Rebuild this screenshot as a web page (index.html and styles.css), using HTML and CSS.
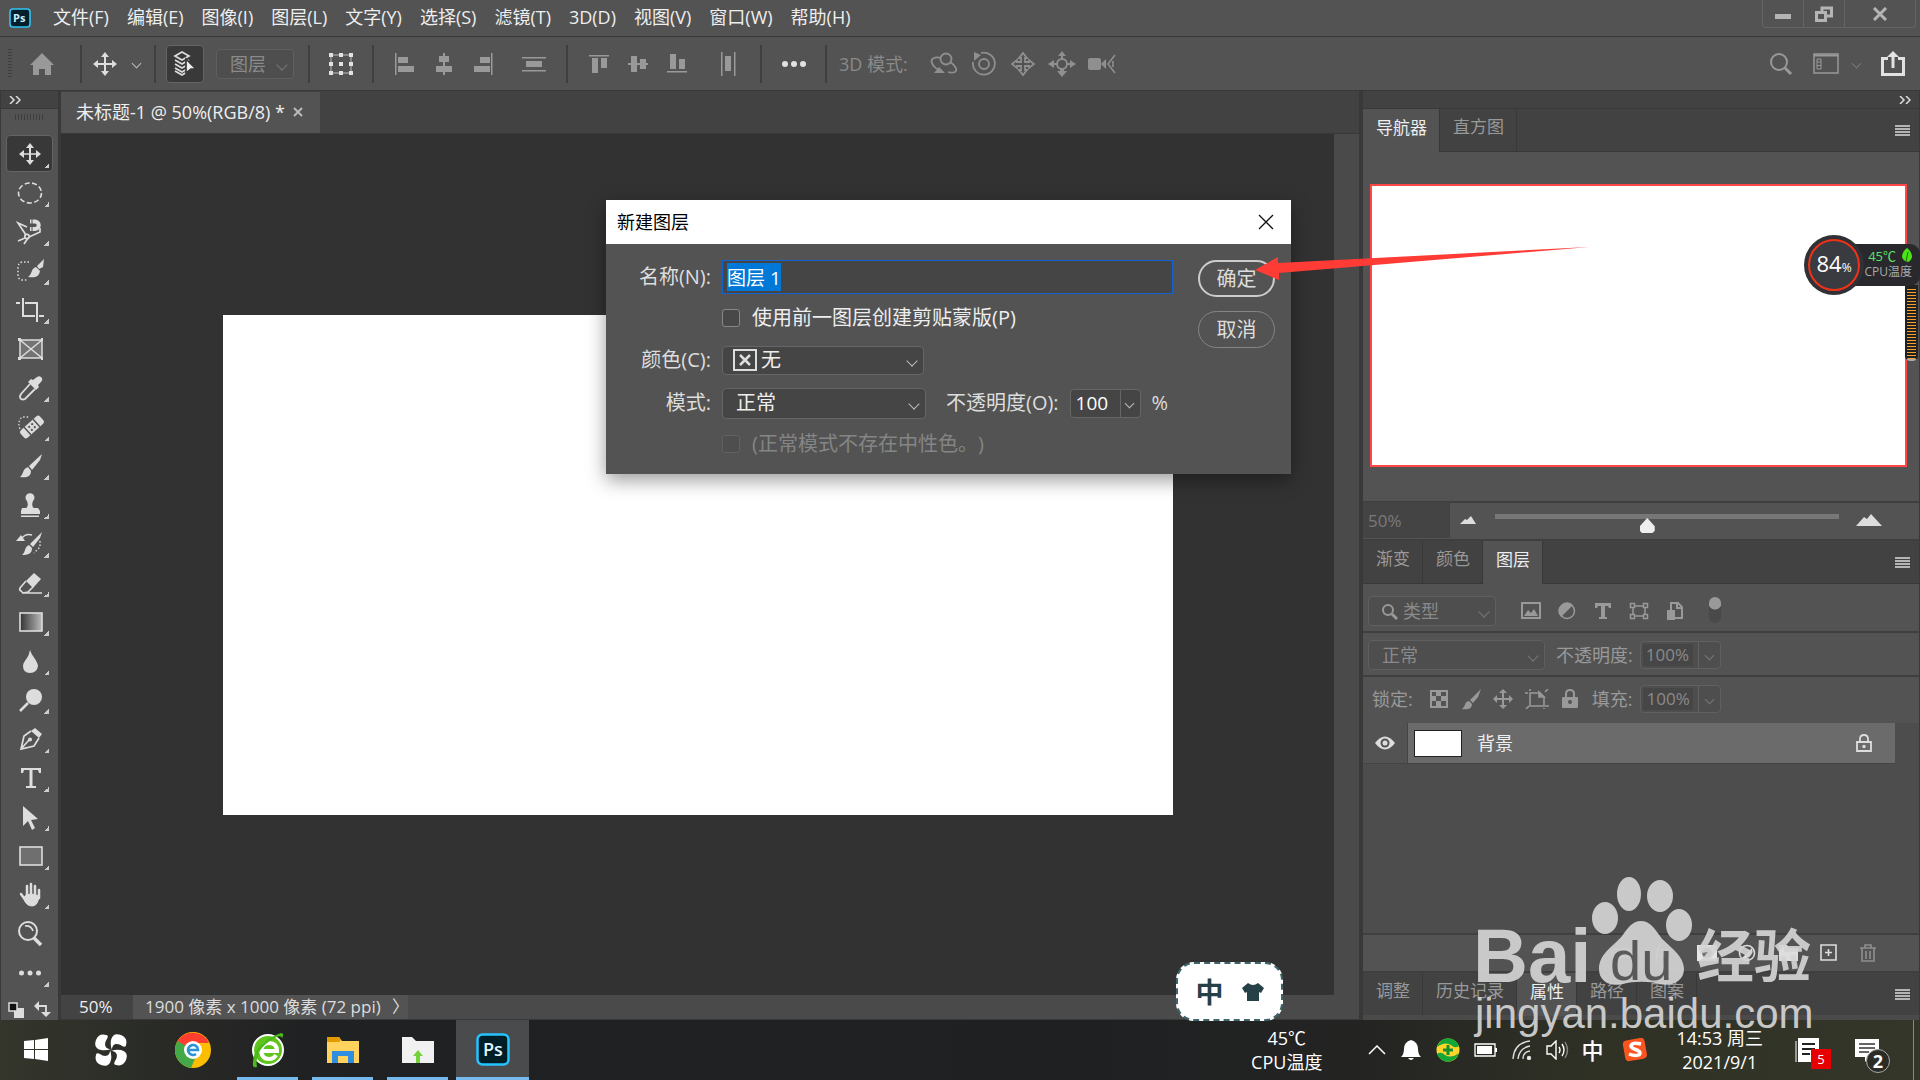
FILE: index.html
```html
<!DOCTYPE html>
<html lang="zh-CN">
<head>
    <meta charset="UTF-8">
    <title>未标题-1 @ 50%(RGB/8)</title>
    <link rel="stylesheet" href="styles.css">
</head>
<body>
    <!-- Menu bar -->
    <header class="menu-bar">
        <svg class="app-logo" viewBox="0 0 22 20"><rect x="1" y="1" width="20" height="18" rx="3" fill="#001e2b" stroke="#31c5f4" stroke-width="1.6"/><text x="4" y="14" class="logo-small">Ps</text></svg>
        <nav class="menus">
            <a href="#">文件(F)</a><a href="#">编辑(E)</a><a href="#">图像(I)</a><a href="#">图层(L)</a><a href="#">文字(Y)</a><a href="#">选择(S)</a><a href="#">滤镜(T)</a><a href="#">3D(D)</a><a href="#">视图(V)</a><a href="#">窗口(W)</a><a href="#">帮助(H)</a>
        </nav>
        <div class="window-buttons">
            <button aria-label="最小化"><svg width="16" height="16"><path d="M0 8h16v5H0z" fill="#b4b4b4"/></svg></button>
            <button aria-label="还原"><svg width="18" height="16" fill="none" stroke="#b4b4b4" stroke-width="3"><path d="M1.500 6.500h9v8h-9zM7 6V2h9.500v8H11"/></svg></button>
            <button class="wide" aria-label="关闭"><svg width="16" height="14" stroke="#b4b4b4" stroke-width="3"><path d="M2 1l12 12M14 1L2 13"/></svg></button>
        </div>
    </header>

    <!-- Options bar -->
    <div class="options-bar">
        <span class="grip-v"></span>
        <button class="icon-btn home" aria-label="主页"><svg width="26" height="24" fill="#999"><path d="M13 1l12 12h-3v10h-6v-6h-6v6H4V13H1z"/></svg></button>
        <span class="divider"></span>
        <button class="icon-btn preset" aria-label="移动工具"><svg width="24" height="24" fill="#ddd"><path d="M12 0l4 5h-3v6h6V8l5 4-5 4v-3h-6v6h3l-4 5-4-5h3v-6H5v3l-5-4 5-4v3h6V5H8z"/></svg><i class="chevron"></i></button>
        <span class="divider"></span>
        <button class="icon-btn pressed" aria-label="自动选择"><svg width="26" height="26" fill="none" stroke="#ddd" stroke-width="1.700"><path d="M10 1l7 4-7 4-7-4zM3 9l7 4 7-4M3 13l7 4 7-4M3 17l7 4 7-4M3 20l7 4 5-3"/><path d="M14 8l10 10h-5l-5 4z" fill="#eee" stroke="#393939"/></svg></button>
        <div class="select auto-target"><select disabled aria-label="自动选择对象"><option>图层</option></select></div>
        <span class="divider"></span>
        <button class="icon-btn transform" aria-label="显示变换控件"><svg width="26" height="24"><path d="M3 3h20v18H3z" fill="none" stroke="#999" stroke-width="1.500"/><path fill="#e2e2e2" d="M1 1h4v4H1zM11 1h4v4h-4zM21 1h4v4h-4zM1 10h4v4H1zM11 10h4v4h-4zM21 10h4v4h-4zM1 19h4v4H1zM11 19h4v4h-4zM21 19h4v4h-4z"/></svg></button>
        <span class="divider"></span>
        <div class="align-group">
            <button class="icon-btn" aria-label="左对齐"><svg width="24" height="24" fill="#999"><path d="M2 1h1.500v22H2zM5 5h10v6H5zM5 14h16v6H5z"/></svg></button>
            <button class="icon-btn" aria-label="水平居中对齐"><svg width="24" height="24" fill="#999"><path d="M11 1h2v22h-2zM7 4h10v6H7zM4 14h16v6H4z"/></svg></button>
            <button class="icon-btn" aria-label="右对齐"><svg width="24" height="24" fill="#999"><path d="M20 1h1.500v22H20zM9 5h10v6H9zM3 14h16v6H3z"/></svg></button>
            <button class="icon-btn spaced" aria-label="垂直分布"><svg width="24" height="24" fill="#999"><path d="M0 5h24v1.500H0zM0 18h24v1.500H0zM4 9h16v6H4z"/></svg></button>
        </div>
        <span class="divider"></span>
        <div class="align-group">
            <button class="icon-btn" aria-label="顶对齐"><svg width="24" height="24" fill="#999"><path d="M2 3h20v1.500H2zM5 6h6v15H5zM14 6h6v10h-6z"/></svg></button>
            <button class="icon-btn" aria-label="垂直居中对齐"><svg width="24" height="24" fill="#999"><path d="M2 11h20v2H2zM5 4h6v16H5zM14 7h6v10h-6z"/></svg></button>
            <button class="icon-btn" aria-label="底对齐"><svg width="24" height="24" fill="#999"><path d="M2 19h20v1.500H2zM5 2h6v15H5zM14 7h6v10h-6z"/></svg></button>
            <button class="icon-btn spaced" aria-label="水平分布"><svg width="24" height="24" fill="#999"><path d="M5 0h1.500v24H5zM18 0h1.500v24H18zM9 4h6v15H9z"/></svg></button>
        </div>
        <span class="divider"></span>
        <button class="icon-btn more" aria-label="更多"><svg width="26" height="8" fill="#e2e2e2"><circle cx="4" cy="4" r="3"/><circle cx="13" cy="4" r="3"/><circle cx="22" cy="4" r="3"/></svg></button>
        <span class="divider"></span>
        <span class="mode-3d">3D 模式:</span>
        <div class="align-group modes">
            <button class="icon-btn" aria-label="环绕"><svg width="28" height="24" fill="none" stroke="#8f8f8f" stroke-width="1.800"><circle cx="16" cy="7" r="5.500"/><path d="M11 6C5 4 0 7 2 11c1 4 6 7 10 8M20 10c5 3 8 8 5 10-2 1-4 1-7 0"/><path d="M9 15l6 6H4z" fill="#8f8f8f" stroke="none"/></svg></button>
            <button class="icon-btn" aria-label="滚动"><svg width="28" height="26" fill="none" stroke="#8f8f8f" stroke-width="1.800"><circle cx="14" cy="13" r="5"/><path d="M11 2a11 11 0 1 1-8 9"/><path d="M4 1l7 3-7 6z" fill="#8f8f8f" stroke="none"/></svg></button>
            <button class="icon-btn" aria-label="平移"><svg width="26" height="26" fill="none" stroke="#8f8f8f" stroke-width="1.800"><path d="M13 2l4 5h-2v4h4V9l5 4-5 4v-2h-4v4h2l-4 5-4-5h2v-4H7v2l-5-4 5-4v2h4V7H9z"/></svg></button>
            <button class="icon-btn" aria-label="滑动"><svg width="28" height="26"><circle cx="14" cy="13" r="5" fill="none" stroke="#8f8f8f" stroke-width="2"/><path fill="#8f8f8f" d="M14 0l4 5h-3v3h-2V5h-3zM0 13l6-4v3h3v2H6v3zM28 13l-6-4v3h-3v2h3v3zM14 26l-5-6h3v-2h4v2h3z"/></svg></button>
            <button class="icon-btn" aria-label="变焦"><svg width="28" height="20" fill="#8f8f8f"><rect x="0" y="4" width="13" height="12" rx="2"/><path d="M13 10l5-5v10z"/><path d="M27 1l-7 9 7 9M25 7v6" fill="none" stroke="#8f8f8f" stroke-width="1.600"/></svg></button>
        </div>
        <div class="bar-end">
            <button class="icon-btn" aria-label="搜索"><svg width="24" height="24" fill="none" stroke="#999" stroke-width="2"><circle cx="10" cy="10" r="8"/><path d="M16 16l6 6" stroke-width="3"/></svg></button>
            <button class="icon-btn" aria-label="工作区"><svg width="26" height="22" fill="none" stroke="#999"><rect x="1" y="1" width="24" height="19" stroke-width="1.500"/><path d="M1 2.500h24" stroke-width="2"/><path d="M4 6h4v10H4zM4 9h4M4 12.500h4"/></svg></button>
            <i class="chevron dim"></i>
            <button class="icon-btn" aria-label="共享"><svg width="26" height="26" fill="none" stroke="#e2e2e2" stroke-width="3"><path d="M8 7.500H2.500v16h21v-16H18M13 17V4"/><path d="M13 0l6 6H7z" fill="#e2e2e2" stroke="none"/></svg></button>
        </div>
    </div>

    <div class="workspace">
        <!-- Tools -->
        <aside class="toolbox">
            <div class="dock-head"><svg width="12" height="8" fill="none" stroke="#ddd" stroke-width="1.500"><path d="M1 0l4 4-4 4M7 0l4 4-4 4"/></svg></div>
            <div class="grip-h"></div>
            <div class="tools">
                <button class="tool active" aria-label="移动"><svg viewBox="0 0 28 28" fill="#ddd"><path d="M14 3l4 5h-3v5.300h5V10l5 4-5 4v-3.300h-5V20h3l-4 5-4-5h3v-5.300H8V18l-5-4 5-4v3.300h5V8h-3z"/></svg></button>
                <button class="tool" aria-label="椭圆选框"><svg viewBox="0 0 28 28" fill="none" stroke="#ddd" stroke-width="1.600"><ellipse cx="14" cy="14" rx="11.500" ry="10" stroke-dasharray="5 2.500"/></svg></button>
                <button class="tool" aria-label="磁性套索"><svg viewBox="0 0 28 28" fill="none" stroke="#ddd" stroke-width="1.700"><path d="M11 9L2 5l8 12M2 23l7-3M8 26l4-6M13 19l11-5v-4"/><circle cx="11" cy="18.500" r="2.200"/><path d="M14 3.500h5a3.500 3.500 0 0 1 0 7.500h-5" stroke-width="4"/><path d="M16 1v12" stroke="#535353" stroke-width="1"/></svg></button>
                <button class="tool" aria-label="快速选择"><svg viewBox="0 0 28 28" fill="#ddd"><path d="M13 5H6q-4 1-4 6v7q0 4 4 5h6" fill="none" stroke="#ddd" stroke-width="1.500" stroke-dasharray="1.500 2"/><path d="M28 2l-1 8-4 2-2-3zM20 10l4 4c-1 6-5 7-12 6 4-2 3-9 8-10z"/></svg></button>
                <button class="tool" aria-label="裁剪"><svg viewBox="0 0 28 28" fill="none" stroke="#ddd" stroke-width="2"><path d="M0 7h4M7 2v18h12M9 7h12v19M23 20h5"/></svg></button>
                <button class="tool plain" aria-label="图框"><svg viewBox="0 0 28 28" fill="#737373" stroke="#ddd" stroke-width="1.500"><path d="M4 5h22v18H4zM4 5l22 18M26 5L4 23"/><path d="M2 3h3v3H2zM25 3h2v3h-2zM2 22h3v3H2zM25 22h2v3h-2z" fill="#ddd" stroke="none"/></svg></button>
                <button class="tool" aria-label="吸管"><svg viewBox="0 0 28 28" fill="#ddd"><path d="M21 3q3-2 5 1 1 2-1 4l-3 3 1 2-3 3-8-8 3-3 2 1z"/><path d="M14 10l-9 10q-2 3 0 5 2 1 4 0l10-10" fill="none" stroke="#ddd" stroke-width="1.800"/></svg></button>
                <button class="tool" aria-label="污点修复"><svg viewBox="0 0 28 28" fill="#ddd"><path d="M4 16q-3-7 2-12h7" fill="none" stroke="#ddd" stroke-width="1.300" stroke-dasharray="1.500 2"/><g transform="rotate(-42 16 14)"><rect x="3" y="9" width="26" height="10" rx="2.500"/><path d="M10 9v10M22 9v10" stroke="#535353" stroke-width="1.500"/><path d="M13 12h7M13 16h7" stroke="#535353" stroke-width="2" stroke-dasharray="2 2"/></g></svg></button>
                <button class="tool" aria-label="画笔"><svg viewBox="0 0 28 28" fill="#ddd"><path d="M26 2l-2 6-8 10-3-4zM12 15l3 4c0 6-5 7-11 6 4-3 2-8 8-10z"/></svg></button>
                <button class="tool" aria-label="仿制图章"><svg viewBox="0 0 28 28" fill="#ddd"><path d="M11 10a4.500 4.500 0 1 1 6 0q-2 5 1 7h4l2 3v3H5v-3l1-3h4q3-2 1-7zM5 24.500h18V26H5z"/></svg></button>
                <button class="tool" aria-label="历史记录画笔"><svg viewBox="0 0 28 28" fill="#ddd"><path d="M26 2l-2 6-7 9-3-3zM13 15l3 3c0 6-4 7-10 7 4-3 2-8 7-10zM0 11l5-6 4 6z"/><path d="M6 8q4-5 10-3" fill="none" stroke="#ddd" stroke-width="1.500"/><path d="M24 11v6l-6 6" fill="none" stroke="#ddd" stroke-width="1.500" stroke-dasharray="1.500 2"/></svg></button>
                <button class="tool" aria-label="橡皮擦"><svg viewBox="0 0 28 28" fill="#ddd"><path d="M18 4l7 6-8 9-7-7z"/><path d="M10 12l-6 7q-1 2 1 3l2 2 5-1 5-5M6 24h20" fill="none" stroke="#ddd" stroke-width="1.600"/></svg></button>
                <button class="tool" aria-label="渐变"><svg viewBox="0 0 28 28"><linearGradient id="grad"><stop stop-color="#333"/><stop offset="1" stop-color="#bbb"/></linearGradient><rect x="4" y="5" width="22" height="18" fill="url(#grad)" stroke="#ddd" stroke-width="1.600"/></svg></button>
                <button class="tool" aria-label="模糊"><svg viewBox="0 0 28 28" fill="#ddd"><path d="M14 3q1 4 5 9 3 5 3 7-1 7-8 7t-7-7q0-3 4-8 2-3 3-8z"/></svg></button>
                <button class="tool" aria-label="减淡"><svg viewBox="0 0 28 28" fill="#ddd"><circle cx="18" cy="11" r="8"/><path d="M12 17l-8 8" stroke="#ddd" stroke-width="2.500"/></svg></button>
                <button class="tool" aria-label="钢笔"><svg viewBox="0 0 28 28" fill="#ddd"><path d="M19 3l7 6-3 4-8-7z"/><path d="M15 6L8 11 5 24l13-3 5-8M5 24l8-9" fill="none" stroke="#ddd" stroke-width="1.700"/><circle cx="14" cy="14.500" r="2"/></svg></button>
                <button class="tool" aria-label="文字"><svg viewBox="0 0 28 28" fill="#ddd"><path d="M5 4h20v5h-2l-1-3h-5.500v16h3.500v2H10v-2h3.500V6H8L7 9H5z"/></svg></button>
                <button class="tool" aria-label="路径选择"><svg viewBox="0 0 28 28" fill="#ddd"><path d="M7 3l15 13-7 1 4 8-3 2-4-9-5 5z"/></svg></button>
                <button class="tool" aria-label="矩形"><svg viewBox="0 0 28 28"><rect x="4" y="5" width="22" height="18" fill="#6f6f6f" stroke="#ddd" stroke-width="1.600"/></svg></button>
                <button class="tool" aria-label="抓手"><svg viewBox="0 0 28 28" fill="#ddd" stroke="#ddd" stroke-linecap="round"><path d="M9 15q5-4 14 0-1 10-7 10t-8-7z"/><path d="M11 16V5M15 14V3M19 14V5M23 17V9M10 20l-5-7" stroke-width="2.500" fill="none"/></svg></button>
                <button class="tool plain" aria-label="缩放"><svg viewBox="0 0 28 28" fill="none" stroke="#ddd" stroke-width="2"><circle cx="12" cy="11" r="9"/><path d="M18 18l7 7" stroke-width="3.500"/><path d="M9 6q6-1 8 5" stroke-width="1.700"/></svg></button>
                <button class="tool" aria-label="编辑工具栏"><svg viewBox="0 0 28 28" fill="#ddd"><circle cx="5.500" cy="14" r="2.500"/><circle cx="14" cy="14" r="2.500"/><circle cx="22.500" cy="14" r="2.500"/></svg></button>
            </div>
            <div class="swatches">
                <svg width="42" height="18"><path d="M6 7h10v10H6z" fill="#ddd"/><path d="M1 2h8v8H1z" fill="#111" stroke="#ddd" stroke-width="1.500"/><path d="M30 5h8v8" fill="none" stroke="#ddd" stroke-width="1.800"/><path d="M26 5l5-5v10zM38 16l-5-5h10z" fill="#ddd"/></svg>
            </div>
        </aside>

        <!-- Document window -->
        <main class="document">
            <div class="doc-tabs">
                <div class="doc-tab">未标题-1 @ 50%(RGB/8) * <button aria-label="关闭文档"><svg width="10" height="10" stroke="#bbb" stroke-width="2"><path d="M1 1l8 8M9 1L1 9"/></svg></button></div>
            </div>
            <div class="canvas-row">
                <div class="canvas"><div class="artboard"></div></div>
                <div class="scroll-v"></div>
            </div>
            <div class="status-bar">
                <span class="zoom-value">50%</span>
                <span class="doc-size">1900 像素 x 1000 像素 (72 ppi)<span class="arrow">〉</span></span>
            </div>
        </main>

        <!-- Panels -->
        <aside class="panels">
            <div class="dock-head end"><svg width="12" height="8" fill="none" stroke="#ddd" stroke-width="1.500"><path d="M1 0l4 4-4 4M7 0l4 4-4 4"/></svg></div>
            <div class="panel-tabs">
                <button class="on">导航器</button><button>直方图</button>
                <span class="panel-menu"></span>
            </div>
            <div class="navigator"><div class="preview"></div></div>
            <div class="nav-zoom">
                <input class="nav-value" type="text" value="50%" aria-label="缩放比例">
                <svg width="16" height="8" fill="#ddd"><path d="M0 8l5-5 2 1 4-4 5 8z"/></svg>
                <input type="range" min="0" max="100" value="44" aria-label="缩放滑块">
                <svg width="26" height="12" fill="#ddd"><path d="M0 12l8-9 3 2 4-5 11 12z"/></svg>
            </div>
            <div class="panel-tabs">
                <button>渐变</button><button>颜色</button><button class="on">图层</button>
                <span class="panel-menu"></span>
            </div>
            <div class="layer-filter">
                <div class="select kind"><svg width="17" height="17" fill="none" stroke="#999" stroke-width="2"><circle cx="7" cy="7" r="5"/><path d="M11 11l5 5" stroke-width="3"/></svg><select disabled aria-label="类型"><option>类型</option></select></div>
                <div class="filter-icons">
                    <svg width="20" height="18"><path d="M1 1h18v15H1z" fill="none" stroke="#999" stroke-width="2"/><path d="M3 14l4-6 3 3 3-4 4 7z" fill="#999"/></svg>
                    <svg width="20" height="18"><circle cx="10" cy="9" r="7.500" fill="none" stroke="#999" stroke-width="1.500"/><path d="M16 3L4 15A8 8 0 0 1 4 3 8 8 0 0 1 16 3z" fill="#999"/></svg>
                    <svg width="20" height="18" fill="#999"><path d="M2 1h16v5h-2l-1-2h-3v11h2v2H6v-2h2V4H5L4 6H2z"/></svg>
                    <svg width="20" height="18" fill="none" stroke="#999" stroke-width="1.500"><path d="M4 4h12v10H4z"/><path d="M1.500 1.500h4v4h-4zM14.500 1.500h4v4h-4zM1.500 12.500h4v4h-4zM14.500 12.500h4v4h-4z" fill="#535353"/></svg>
                    <svg width="20" height="18"><path d="M6 8V1h7l4 4v11h-7M12 1v5h5" fill="none" stroke="#999" stroke-width="2"/><path d="M2 8h8v10H2z" fill="#999"/></svg>
                </div>
                <span class="toggle"></span>
            </div>
            <div class="layer-mode">
                <div class="select blend"><select disabled aria-label="混合模式"><option>正常</option></select></div>
                <label for="opacity">不透明度:</label>
                <div class="spin dim"><input id="opacity" type="text" value="100%" disabled><i class="chevron dim"></i></div>
            </div>
            <div class="layer-lock">
                <span class="lock-label">锁定:</span>
                <div class="lock-icons">
                    <svg width="20" height="20"><path d="M2 2h16v16H2z" fill="none" stroke="#999" stroke-width="2"/><path fill="#999" d="M7 3h5v4H7zM3 7h4v5H3zM12 7h5v5h-5zM7 12h5v5H7z"/></svg>
                    <svg width="20" height="22" fill="#999"><path d="M20 1l-3 8-5 6-3-3zM8 13l3 3c0 5-5 6-10 5 4-3 2-7 7-8z"/></svg>
                    <svg width="20" height="20" fill="#999"><path d="M10 0l4 4h-3v5h5V6l4 4-4 4v-3h-5v5h3l-4 4-4-4h3v-5H4v3l-4-4 4-4v3h5V4H6z"/></svg>
                    <svg width="24" height="20" fill="none" stroke="#999" stroke-width="1.600"><path d="M5 4h10l4 4v9H5zM0 4h3M5 0v2M20 17h4M19 19v2M20 3l3-3M1 20l3-3"/><path d="M14 3l5 5h-5z" fill="#999"/></svg>
                    <svg width="18" height="20"><path d="M5 9V5q0-4 4-4t4 4v4" fill="none" stroke="#999" stroke-width="2"/><rect x="1" y="8" width="16" height="11" rx="1" fill="#999"/><circle cx="9" cy="13" r="2" fill="#535353"/></svg>
                </div>
                <label for="fill">填充:</label>
                <div class="spin dim"><input id="fill" type="text" value="100%" disabled><i class="chevron dim"></i></div>
            </div>
            <div class="layer-list">
                <div class="layer">
                    <span class="eye"><svg width="20" height="14"><path d="M0 7q10-13 20 0Q10 20 0 7z" fill="#ddd"/><circle cx="10" cy="7" r="4.500" fill="#535353"/><circle cx="10" cy="7" r="2.500" fill="#ddd"/></svg></span>
                    <div class="layer-body">
                        <span class="thumb"></span>
                        <span class="layer-name">背景</span>
                        <svg width="16" height="19"><path d="M4 8V5q0-4 4-4t4 4v3M1 8h14v9H1z" fill="none" stroke="#ddd" stroke-width="1.800"/><circle cx="8" cy="12.500" r="1.700" fill="#ddd"/></svg>
                    </div>
                </div>
            </div>
            <div class="layer-footer">
                <svg width="22" height="18" fill="none" stroke="#888" stroke-width="2"><rect x="1" y="5" width="11" height="8" rx="4"/><rect x="9" y="5" width="11" height="8" rx="4"/></svg>
                <svg width="22" height="22"><text x="1" y="16" class="fx">fx</text></svg>
                <svg width="20" height="16"><path d="M0 0h20v16H0z" fill="#e6e6e6"/><circle cx="10" cy="8" r="5" fill="#777"/></svg>
                <svg width="20" height="18"><circle cx="9" cy="9" r="7.500" fill="none" stroke="#ddd" stroke-width="1.600"/><path d="M14 4L4 14a8 8 0 0 0 10-10z" fill="#ddd"/></svg>
                <svg width="20" height="16" fill="#ddd"><path d="M0 0h8l2 3h9v13H0z"/></svg>
                <svg width="18" height="18" fill="none" stroke="#ddd" stroke-width="1.600"><path d="M1 1h15v15H1zM8.500 5v7M5 8.500h7"/></svg>
                <svg width="18" height="18" fill="none" stroke="#8f8f8f" stroke-width="1.600"><path d="M1 4h16M6 4V1h6v3M3 4v13h12V4M7 7v8M11 7v8"/></svg>
            </div>
            <div class="panel-tabs bottom">
                <button>调整</button><button>历史记录</button><button class="on">属性</button><button>路径</button><button>图案</button>
                <span class="panel-menu"></span>
            </div>
        </aside>
    </div>

    <!-- Taskbar -->
    <footer class="taskbar">
        <div class="apps">
            <button class="app start" aria-label="开始"><svg width="26" height="26" fill="#fff"><path d="M1 4l10-1v9H1zM12 3l13-2v11H12zM1 13h10v9L1 21zM12 13h13v11l-13-2z"/></svg></button>
            <button class="app launcher" aria-label="启动器"><svg width="32" height="32" viewBox="0 0 32 32" fill="#fff"><path d="M16 15C9 15 9 9 12 5q2-4-1-4-7-2-10 5-3 8 5 10 5 1 10-1z"/><path d="M17 16C17 9 23 9 27 12q4 2 4-1 2-7-5-10-8-3-10 5-1 5 1 10z"/><path d="M16 17c7 0 7 6 4 10q-2 4 1 4 7 2 10-5 3-8-5-10-5-1-10 1z"/><path d="M15 16c0 7-6 7-10 4q-4-2-4 1-2 7 5 10 8 3 10-5 1-5-1-10z"/></svg></button>
            <button class="app" aria-label="浏览器"><svg width="36" height="36" viewBox="0 0 36 36"><circle cx="18" cy="18" r="18" fill="#fdbd00"/><path d="M18 18L2 10a18 18 0 0 1 32 1H18z" fill="#ff3e30"/><path d="M2.500 9A18 18 0 0 0 16 36l6-14-4-4z" fill="#43a948"/><circle cx="18" cy="18" r="9" fill="#fff"/><path d="M13 18h10a5 5 0 1 0-2 4" fill="none" stroke="#2a93d5" stroke-width="2.600"/></svg></button>
            <button class="app running" aria-label="安全浏览器"><svg width="34" height="36" viewBox="0 0 34 36"><circle cx="17" cy="18" r="15" fill="#5fc41c" stroke="#fff" stroke-width="2"/><path d="M10 19h16q0-8-8-8-7 0-8 8 1 8 8 8 5 0 7-4" fill="none" stroke="#fff" stroke-width="4"/><path d="M2 34Q0 12 30 1q4 0 1 5-1-4-9 1Q3 18 6 35q-3 1-4-1z" fill="#4cb81a"/></svg></button>
            <button class="app running" aria-label="文件夹"><svg width="32" height="28"><path d="M0 1h12l3 4h17v22H0z" fill="#ffd35c"/><path d="M0 1h12l2 3-2 2H0z" fill="#e39a00"/><path d="M5 15h22v12h-6v-7H11v7H5z" fill="#2f8ee0"/></svg></button>
            <button class="app running" aria-label="上传"><svg width="32" height="28"><path d="M0 1h10l4 4h18v22H0z" fill="#f1f1f1"/><path d="M16 14l5 6h-3v7h-4v-7h-3z" fill="#74d33a"/></svg></button>
            <button class="app running current" aria-label="Photoshop"><svg width="34" height="34"><rect x="1.500" y="1.500" width="31" height="30" rx="5" fill="#001e26" stroke="#26c3ff" stroke-width="2.500"/><text x="7" y="23" class="logo-large">Ps</text></svg></button>
        </div>
        <div class="tray">
            <div class="cpu">45℃<br>CPU温度</div>
            <svg width="18" height="10" fill="none" stroke="#fff" stroke-width="1.500"><path d="M1 9l8-8 8 8"/></svg>
            <svg width="22" height="22" fill="#fff"><path d="M11 1q7 2 7 9 0 5 3 8H1q3-3 3-8 0-7 7-9zM8 19h6q-3 4-6 0z"/></svg>
            <svg width="24" height="24"><circle cx="12" cy="12" r="11.500" fill="#ffd52b"/><path d="M1 9A11.500 11.500 0 0 1 23 8q-4 3-8-1-6-4-14 2zM23 15A11.500 11.500 0 0 1 1 16q4-3 8 1 6 4 14-2z" fill="#14a637"/><path d="M12 7v10M7 12h10" stroke="#14902e" stroke-width="3"/></svg>
            <svg width="24" height="14"><path d="M1 1h20v12H1z" fill="none" stroke="#fff" stroke-width="1.300"/><path d="M3 3h15v8H3zM21 5h2v4h-2z" fill="#fff"/></svg>
            <svg width="20" height="20" fill="none" stroke="#ddd" stroke-width="1.400"><path d="M1 19Q2 3 18 1M6 19Q7 8 18 6M11 19q0-7 7-8"/><circle cx="17" cy="18" r="1.500" fill="#fff"/></svg>
            <svg width="24" height="20" fill="none" stroke="#fff" stroke-width="1.400"><path d="M1 6h4l5-5v18l-5-5H1zM13 7q2 3 0 6M16 4q4 6 0 12"/><path d="M19 2q5 8 0 16" stroke="#888"/></svg>
            <span class="ime">中</span>
            <svg class="sogou" width="26" height="24"><rect x="2" y="1" width="22" height="21" rx="4" fill="#f9561f" transform="rotate(-10 13 12)"/><path d="M19 6q-9-2-10 2c0 4 9 3 9 7 0 3-6 3-11 1" fill="none" stroke="#fff" stroke-width="3.500"/></svg>
            <div class="clock">14:53 周三<br>2021/9/1</div>
            <div class="note"><svg width="26" height="26"><path d="M3 1h21v24H3z" fill="#fff"/><path d="M1 4v21" stroke="#fff"/><path d="M7 7h13M7 12h13M7 17h8" stroke="#222" stroke-width="2"/></svg><span class="badge">5</span></div>
            <div class="note"><svg width="26" height="26"><path d="M1 2h24v18H15l-4 5v-5H1z" fill="#fff"/><path d="M5 7h16M5 11h16M5 15h10" stroke="#333" stroke-width="1.500"/></svg><span class="count">2</span></div>
            <span class="desktop-edge"></span>
        </div>
    </footer>

    <!-- New layer dialog -->
    <form class="dialog">
        <div class="dialog-title">新建图层<button type="button" aria-label="关闭"><svg width="16" height="16" stroke="#111" stroke-width="1.300"><path d="M1 1l14 14M15 1L1 15"/></svg></button></div>
        <div class="dialog-body">
            <div class="fields">
                <label for="layer-name">名称(N):</label>
                <input id="layer-name" type="text" value="图层 1">
                <span></span>
                <label class="check"><input type="checkbox">使用前一图层创建剪贴蒙版(P)</label>
                <label for="layer-color">颜色(C):</label>
                <div class="select color"><svg width="24" height="22" fill="none" stroke="#ddd" stroke-width="2"><path d="M1 1h22v20H1z"/><path d="M7 6l10 10M17 6L7 16" stroke-width="2.500"/></svg><select id="layer-color"><option>无</option></select></div>
                <label for="layer-mode">模式:</label>
                <div class="mode-row">
                    <div class="select mode"><select id="layer-mode"><option>正常</option></select></div>
                    <label for="layer-opacity">不透明度(O):</label>
                    <div class="spin"><input id="layer-opacity" type="text" value="100"><i class="chevron"></i></div>
                    <span>%</span>
                </div>
                <span></span>
                <label class="check off"><input type="checkbox" disabled>(正常模式不存在中性色。)</label>
            </div>
            <div class="actions">
                <button type="submit" class="primary">确定</button>
                <button type="button">取消</button>
            </div>
        </div>
        <svg class="pointer" width="336" height="36" fill="#ff3b36"><path d="M1 24l23-13v6L335 1 25 27v7z"/></svg>
    </form>

    <!-- CPU monitor -->
    <div class="monitor">
        <div class="monitor-text"><span class="temp">45℃ <svg width="10" height="14"><path d="M5 0q5 4 5 9-1 4-4 5-5-1-6-5Q0 4 5 0z" fill="#4be316"/><path d="M6 4L4 14" stroke="#1d6d08"/></svg></span><span>CPU温度</span></div>
        <div class="monitor-dial"><span>84<small>%</small></span></div>
        <div class="monitor-meter"></div>
    </div>

    <!-- Input method bar -->
    <div class="ime-bar"><span>中</span><svg width="22" height="18" fill="#264048"><path d="M6 0q5 4 10 0l6 5-3 5-2-1v9H5V9l-2 1-3-5z"/></svg></div>

    <!-- Watermark -->
    <svg class="watermark" width="350" height="180" fill="#d4d4d4">
        <text x="0" y="112" class="wm-latin">Bai</text>
        <ellipse cx="156" cy="24" rx="12" ry="17"/><ellipse cx="187" cy="26" rx="13" ry="16"/><ellipse cx="132" cy="48" rx="13" ry="16"/><ellipse cx="206" cy="55" rx="13" ry="16"/>
        <path d="M168 51c9 0 13 7 19 15 6 9 24 18 24 33 0 12-12 18-24 15-10-3-27-3-37 0-14 3-24-3-24-15 0-16 16-24 23-33 6-8 10-15 19-15z"/>
        <text x="137" y="110" class="wm-du">du</text>
        <text x="224" y="107" class="wm-cjk">经验</text>
        <text x="2" y="158" class="wm-url">jingyan.baidu.com</text>
    </svg>

    <script>
        document.querySelector('.dialog').addEventListener('submit', e => e.preventDefault());
        document.getElementById('layer-name').select();
    </script>
</body>
</html>
```
FILE: styles.css
```css
/* Base */
* {
    box-sizing: border-box;
}

body {
    margin: 0;
    height: 100vh;
    display: flex;
    flex-direction: column;
    overflow: hidden;
    position: relative;
    background: #535353;
    color: #eee;
    font-family: "Open Sans", "Noto Sans CJK SC", sans-serif;
    font-size: 18px;
    line-height: 24px;
}

button, input, select {
    font: inherit;
    color: inherit;
    margin: 0;
}

button {
    background: none;
    border: none;
    padding: 0;
}

a {
    color: inherit;
    text-decoration: none;
}

svg {
    display: block;
    flex: none;
}

.chevron, .select::after {
    content: "";
    width: 7px;
    height: 7px;
    border: solid #bbb;
    border-width: 0 1px 1px 0;
    transform: rotate(45deg);
    flex: none;
}

.chevron.dim {
    border-color: #777;
}

/* Menu bar */
.menu-bar {
    height: 37px;
    display: flex;
    align-items: center;
    padding-left: 9px;
    border-bottom: 1px solid #383838;
    flex: none;
}

.app-logo {
    width: 22px;
    height: 20px;
}

.logo-small {
    font: bold 11px "Open Sans", sans-serif;
    fill: #cfeefa;
}

.menus {
    display: flex;
    gap: 18px;
    margin-left: 22px;
    flex: 1;
    padding-bottom: 2px;
}

.window-buttons {
    display: flex;
    align-self: flex-start;
    height: 28px;
    margin-right: 4px;
    border: 1px solid #646464;
    border-top: none;
    border-radius: 0 0 4px 4px;
}

.window-buttons button {
    width: 41px;
    display: grid;
    place-items: center;
    border-right: 1px solid #646464;
}

.window-buttons .wide {
    width: 70px;
    border-right: none;
}

/* Options bar */
.options-bar {
    height: 54px;
    display: flex;
    align-items: center;
    border-bottom: 1px solid #383838;
    flex: none;
}

.icon-btn {
    display: flex;
    align-items: center;
    justify-content: center;
}

.grip-v {
    width: 4px;
    height: 30px;
    margin-left: 8px;
    background: repeating-linear-gradient(#3e3e3e 0 1px, transparent 1px 3px);
}

.divider {
    width: 2px;
    height: 38px;
    background: #3f3f3f;
}

.home {
    width: 68px;
    padding-right: 8px;
}

.preset {
    width: 72px;
    padding-right: 4px;
    gap: 16px;
}

.pressed {
    width: 38px;
    height: 38px;
    margin: 0 12px 0 10px;
    background: #393939;
    border: 1px solid #646464;
    border-radius: 4px;
}

.select {
    position: relative;
    display: flex;
    align-items: center;
    background: #454545;
    border: 1px solid #666;
    border-radius: 4px;
}

.select select {
    appearance: none;
    background: none;
    border: none;
    outline: none;
    width: 100%;
    padding: 0 0 0 13px;
    opacity: 1;
}

.select::after {
    position: absolute;
    right: 7px;
    top: 50%;
    margin-top: -3px;
    pointer-events: none;
}

.auto-target, .kind, .blend {
    background: #4e4e4e;
    border-color: #5f5f5f;
    color: #8a8a8a;
}

.auto-target::after, .kind::after, .blend::after {
    border-color: #777;
}

.auto-target {
    width: 78px;
    height: 30px;
    margin-right: 14px;
}

.transform {
    width: 62px;
}

.align-group {
    display: flex;
    gap: 15px;
    width: 192px;
    padding-left: 19px;
}

.align-group .spaced {
    margin-left: 12px;
}

.more {
    width: 63px;
}

.mode-3d {
    margin-left: 12px;
    color: #8a8a8a;
}

.modes {
    gap: 12px;
    padding-left: 22px;
    width: auto;
}

.bar-end {
    margin-left: auto;
    margin-right: 14px;
    display: flex;
    align-items: center;
    gap: 20px;
}

.bar-end .chevron {
    margin-left: -6px;
}

/* Workspace */
.workspace {
    flex: 1;
    min-height: 0;
    display: flex;
    background: #393939;
}

.toolbox {
    width: 57px;
    display: flex;
    flex-direction: column;
    background: #535353;
    margin: 0 3px 0 1px;
}

.dock-head {
    height: 18px;
    padding: 5px 8px;
    background: #424242;
    border-bottom: 1px solid #383838;
    flex: none;
}

.dock-head.end {
    display: flex;
    justify-content: flex-end;
}

.grip-h {
    width: 30px;
    height: 6px;
    margin: 5px 14px 15px;
    background: repeating-linear-gradient(90deg, #3e3e3e 0 1px, transparent 1px 3px);
    flex: none;
}

.tools {
    display: grid;
    gap: 2px;
    justify-content: center;
}

.tool {
    position: relative;
    width: 47px;
    height: 37px;
    display: grid;
    place-items: center;
    border: 1px solid transparent;
    border-radius: 4px;
}

.tool.active {
    background: #383838;
    border-color: #646464;
}

.tool svg {
    width: 28px;
    height: 28px;
    overflow: visible;
}

.tool::after {
    content: "";
    position: absolute;
    right: 3px;
    bottom: 3px;
    width: 5px;
    height: 5px;
    background: linear-gradient(135deg, transparent 50%, #ccc 50%);
}

.tool.plain::after {
    display: none;
}

.swatches {
    margin: 10px 0 0 7px;
}

.swatches svg {
    overflow: visible;
}

/* Document window */
.document {
    flex: 1;
    min-width: 0;
    display: flex;
    flex-direction: column;
}

.doc-tabs {
    height: 43px;
    background: #424242;
    border-bottom: 1px solid #383838;
    padding-top: 1px;
    flex: none;
}

.doc-tab {
    width: 259px;
    height: 41px;
    display: flex;
    align-items: center;
    justify-content: space-between;
    padding: 0 17px 2px 15px;
    background: #535353;
    white-space: nowrap;
}

.canvas-row {
    flex: 1;
    min-height: 0;
    display: flex;
}

.canvas {
    flex: 1;
    display: grid;
    place-items: center;
    background: #323232;
}

.artboard {
    width: 950px;
    height: 500px;
    background: #fff;
}

.scroll-v {
    width: 25px;
    background: #4a4a4a;
}

.status-bar {
    height: 25px;
    display: flex;
    background: #4a4a4a;
    font-size: 17px;
    line-height: 24px;
    border-bottom: 1px solid #393939;
    flex: none;
}

.zoom-value {
    width: 72px;
    padding-left: 18px;
    background: #434343;
}

.doc-size {
    display: flex;
    justify-content: space-between;
    width: 275px;
    padding-left: 12px;
    background: #535353;
    color: #ddd;
    white-space: nowrap;
}

.arrow {
    width: 16px;
    overflow: hidden;
}

/* Panels */
.panels {
    width: 556px;
    margin: 0 1px 0 4px;
    display: flex;
    flex-direction: column;
    background: #535353;
}

.panel-tabs {
    display: flex;
    align-items: stretch;
    height: 43px;
    background: #424242;
    border-bottom: 1px solid #383838;
    flex: none;
}

.panel-tabs button {
    padding: 0 12px 6px 13px;
    color: #999;
    font-size: 17px;
    border-right: 1px solid #383838;
}

.panel-tabs .on {
    background: #535353;
    color: #eee;
    margin-bottom: -1px;
}

.panel-menu {
    width: 15px;
    height: 11px;
    margin: 16px 9px 0 auto;
    background: repeating-linear-gradient(#b4b4b4 0 2px, transparent 2px 3px);
}

.navigator {
    height: 351px;
    padding: 32px 12px 34px 7px;
    border-bottom: 2px solid #3f3f3f;
    flex: none;
}

.preview {
    height: 100%;
    background: #fff;
    border: 2px solid #ff4747;
}

.nav-zoom {
    height: 38px;
    display: flex;
    align-items: center;
    padding: 0 37px 2px 0;
    border-bottom: 2px solid #3f3f3f;
    flex: none;
}

.nav-value {
    width: 87px;
    height: 36px;
    margin-right: 10px;
    padding: 0 5px;
    border: none;
    background: #444;
    color: #7a7a7a;
    font-size: 17px;
}

.nav-zoom input[type="range"] {
    appearance: none;
    flex: 1;
    min-width: 0;
    height: 20px;
    margin: 0 17px 0 19px;
    background: none;
}

.nav-zoom input[type="range"]::-webkit-slider-runnable-track {
    height: 5px;
    margin-bottom: 7px;
    background: #777;
}

.nav-zoom input[type="range"]::-webkit-slider-thumb {
    appearance: none;
    width: 15px;
    height: 15px;
    margin-top: 4px;
    background: #eee;
    clip-path: polygon(50% 0, 100% 55%, 100% 85%, 85% 100%, 15% 100%, 0 85%, 0 55%);
}

.layer-filter, .layer-mode {
    display: flex;
    align-items: center;
    height: 49px;
    padding: 7px 0 0 5px;
    border-bottom: 2px solid #3f3f3f;
    flex: none;
}

.layer-mode {
    height: 44px;
    padding-top: 2px;
}

.kind {
    width: 128px;
    height: 30px;
    padding-left: 12px;
}

.kind select {
    padding-left: 5px;
}

.filter-icons {
    display: flex;
    gap: 16px;
    margin: 0 24px 0 25px;
}

.toggle {
    width: 12px;
    height: 26px;
    margin-top: -2px;
    border-radius: 6px;
    background: radial-gradient(circle at 6px 6px, #999 6px, #494949 7px);
}

.blend {
    width: 177px;
    height: 30px;
}

.layer-mode label, .layer-lock label, .lock-label {
    color: #999;
}

.layer-mode label {
    margin: 0 7px 0 11px;
}

.spin {
    display: flex;
    align-items: center;
    justify-content: space-between;
    width: 71px;
    height: 29px;
    padding-right: 7px;
    background: linear-gradient(90deg, #454545 49px, #666 49px 50px, #454545 50px);
    border: 1px solid #666;
    border-radius: 4px;
}

.spin input {
    width: 44px;
    height: 24px;
    padding: 0 5px;
    border: none;
    outline: none;
    background: none;
}

.spin.dim {
    width: 81px;
    height: 28px;
    padding: 0 7px 0 2px;
    background: linear-gradient(90deg, #4e4e4e 57px, #606060 57px 58px, #4e4e4e 58px);
    border-color: #606060;
}

.spin.dim input {
    width: 50px;
    height: 22px;
    padding: 0 3px;
    background: #464646;
    color: #8a8a8a;
    font-size: 17px;
}

.layer-lock {
    display: flex;
    align-items: center;
    height: 46px;
    padding: 0 0 2px 9px;
    flex: none;
}

.lock-icons {
    display: flex;
    align-items: center;
    gap: 12px;
    margin: 0 13px 0 16px;
}

.layer-lock label {
    margin-right: 8px;
}

.layer-list {
    flex: 1;
    min-height: 0;
    background: #4d4d4d;
    border-bottom: 2px solid #3f3f3f;
}

.layer {
    display: flex;
    height: 41px;
    margin-right: 24px;
    border-bottom: 1px solid #444;
}

.eye {
    width: 45px;
    display: grid;
    place-items: center;
    background: #535353;
    border-right: 1px solid #444;
}

.layer-body {
    flex: 1;
    display: flex;
    align-items: center;
    padding: 0 23px 0 6px;
    background: #6b6b6b;
}

.thumb {
    width: 48px;
    height: 27px;
    background: #fff;
    border: 1px solid #222;
}

.layer-name {
    margin-left: 15px;
    flex: 1;
}

.layer-footer {
    height: 38px;
    display: flex;
    align-items: center;
    justify-content: flex-end;
    gap: 21px;
    padding-right: 42px;
    border-bottom: 2px solid #3f3f3f;
    flex: none;
}

.fx {
    font: italic 18px "Liberation Serif", serif;
    fill: #aaa;
}

.panel-tabs.bottom {
    height: 47px;
    border-bottom: 5px solid #4a4a4a;
}

/* Taskbar */
.taskbar {
    height: 60px;
    display: flex;
    justify-content: space-between;
    background: linear-gradient(90deg, #34362c, #202122 300px, #1f2022 1100px, #232422 1350px, #303125 1600px, #35362a);
    color: #fff;
    flex: none;
}

.apps, .tray {
    display: flex;
    align-items: center;
}

.app {
    width: 61px;
    height: 60px;
    margin-right: 14px;
    display: grid;
    place-items: center;
    border-bottom: 3px solid transparent;
    padding-top: 3px;
}

.app.start {
    width: 72px;
    margin-right: 8px;
}

.app.launcher {
    margin-right: 21px;
}

.app.running {
    border-color: #76b9ed;
}

.app.current {
    width: 73px;
    margin-left: -6px;
    margin-right: 0;
    background: #4a4b4c;
}

.logo-large {
    font: 600 18px "Open Sans", sans-serif;
    fill: #e2f6ff;
}

.tray {
    gap: 14px;
    padding-right: 6px;
}

.cpu, .clock {
    text-align: center;
    white-space: nowrap;
}

.cpu {
    margin-right: 32px;
}

.ime {
    margin-left: -3px;
    font-size: 22px;
    font-weight: 500;
}

.sogou {
    margin: 0 14px 0 5px;
}

.clock {
    margin-right: 18px;
}

.note {
    position: relative;
    margin-right: 19px;
}

.note + .desktop-edge {
    width: 1px;
    height: 60px;
    background: #888;
}

.badge, .count {
    position: absolute;
    left: 16px;
    top: 12px;
    width: 20px;
    height: 20px;
    background: #e60000;
    font-size: 13px;
    line-height: 20px;
    text-align: center;
}

.count {
    left: 12px;
    width: 24px;
    height: 24px;
    border: 1px solid #aaa;
    border-radius: 50%;
    background: #2b2c26;
    font-size: 18px;
    font-weight: bold;
    line-height: 22px;
}

/* New layer dialog */
.dialog {
    position: absolute;
    left: 606px;
    top: 200px;
    width: 685px;
    background: #535353;
    box-shadow: 0 6px 18px rgba(0, 0, 0, 0.4);
    font-size: 20px;
    color: #ddd;
}

.dialog-title {
    height: 44px;
    display: flex;
    align-items: center;
    justify-content: space-between;
    padding: 0 17px 0 11px;
    background: #fff;
    color: #000;
    font-size: 18px;
}

.dialog-body {
    display: flex;
    justify-content: space-between;
    align-items: flex-start;
    padding: 16px 16px 14px;
}

.fields {
    display: grid;
    grid-template-columns: 89px 451px;
    column-gap: 11px;
    grid-template-rows: 34px 48px 36px 50px 32px;
    align-items: center;
    white-space: nowrap;
}

.fields > label {
    text-align: right;
}

.fields > .check {
    display: flex;
    align-items: center;
    gap: 12px;
    text-align: left;
    color: #eee;
}

.fields > .check.off {
    color: #858585;
    text-spacing-trim: space-all;
}

.check input {
    appearance: none;
    width: 18px;
    height: 18px;
    border: 1px solid #888;
    border-radius: 3px;
    background: #484848;
}

.check.off input {
    border-color: #606060;
    background: #4e4e4e;
}

#layer-name {
    height: 34px;
    padding: 0 4px;
    background: #454545;
    border: 1px solid #1463d2;
    outline: none;
    font-size: 19px;
}

#layer-name::selection {
    background: #0078d7;
    color: #fff;
}

.color {
    width: 202px;
    height: 29px;
    padding-left: 10px;
    color: #eee;
}

.color select {
    padding-left: 4px;
}

.mode-row {
    display: flex;
    align-items: center;
}

.mode {
    width: 204px;
    height: 31px;
    margin-right: 20px;
    color: #eee;
}

.mode-row .spin {
    margin: 0 11px;
    color: #fff;
    font-size: 19px;
}

.actions {
    display: grid;
    gap: 14px;
}

.actions button {
    width: 77px;
    height: 37px;
    border: 1px solid #858585;
    border-radius: 19px;
    color: #ddd;
}

.actions .primary {
    border: 2px solid #ccc;
}

.pointer {
    position: absolute;
    left: 648px;
    top: 46px;
}

/* CPU monitor */
.monitor {
    position: absolute;
    right: 0;
    top: 235px;
    width: 116px;
    height: 130px;
    font-size: 12px;
    line-height: 16px;
}

.monitor-text {
    position: absolute;
    left: 30px;
    right: 0;
    top: 9px;
    height: 42px;
    padding: 4px 8px 0 0;
    display: grid;
    justify-items: end;
    align-content: start;
    background: #28282d;
    border-radius: 0 10px 10px 0;
    color: #aaa;
    z-index: 1;
}

.temp {
    display: flex;
    gap: 6px;
    color: #5ee06a;
    font-size: 13px;
}

.monitor-dial {
    position: absolute;
    left: 0;
    top: 0;
    width: 60px;
    height: 60px;
    padding: 4px;
    border-radius: 50%;
    background: #303037;
    z-index: 2;
}

.monitor-dial span {
    display: grid;
    grid-auto-flow: column;
    place-content: center;
    align-items: baseline;
    width: 52px;
    height: 52px;
    border: 2px solid #f03316;
    border-radius: 50%;
    background: #3a3b41;
    color: #fff;
    font-size: 22px;
    line-height: 24px;
}

.monitor-dial small {
    font-size: 12px;
}

.monitor-meter {
    position: absolute;
    right: 2px;
    top: 50px;
    width: 13px;
    height: 76px;
    border: 2px solid #222;
    border-bottom-color: #aaa;
    border-radius: 0 0 5px 5px;
    background: repeating-linear-gradient(#222 0 2px, #f6a12a 2px 3px);
}

/* Input method bar */
.ime-bar {
    position: absolute;
    left: 1176px;
    bottom: 59px;
    width: 107px;
    height: 59px;
    display: flex;
    align-items: center;
    justify-content: center;
    gap: 18px;
    background: #fff;
    border: 2px dashed #3e656c;
    border-radius: 18px;
    color: #264048;
    font-size: 28px;
    font-weight: bold;
}

/* Watermark */
.watermark {
    position: absolute;
    right: 97px;
    bottom: 30px;
    opacity: 0.92;
    pointer-events: none;
}

.wm-latin {
    font: bold 76px "Liberation Sans", sans-serif;
}

.wm-du {
    font: 56px "Liberation Sans", sans-serif;
    fill: #5a5a5a;
}

.wm-cjk {
    font: bold 57px "Noto Sans CJK SC", sans-serif;
}

.wm-url {
    font: 42px "Liberation Sans", sans-serif;
}
```
